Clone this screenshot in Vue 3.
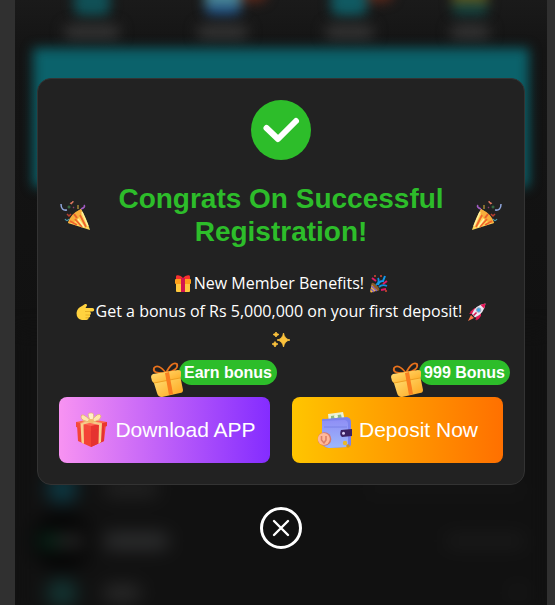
<template>
  <div class="page">
    <!-- blurred page behind the dialog -->
    <div class="backdrop" aria-hidden="true">
      <div class="nav">
        <div v-for="n in navItems" :key="n" class="nav-item" :class="n">
          <i class="nav-icon"></i>
          <i class="nav-label"></i>
        </div>
      </div>
      <div class="banner"></div>
      <div class="list">
        <div v-for="r in rows" :key="r" class="row" :class="r">
          <i class="row-icon"></i>
          <i class="row-label"></i>
          <i class="row-value"></i>
        </div>
      </div>
    </div>

    <div class="overlay">
      <section class="dialog" role="dialog" aria-labelledby="title">
        <svg class="check" viewBox="0 0 60 60">
          <circle cx="30" cy="30" r="30" fill="#2dbd2a" />
          <path d="M15.5 28 L27 39 L45 21" fill="none" stroke="#fff" stroke-width="6" stroke-linecap="round" stroke-linejoin="round" />
        </svg>

        <div class="heading">
          <svg class="popper" viewBox="0 0 32 32"><use href="#popper" /></svg>
          <h1 id="title">Congrats On Successful Registration!</h1>
          <svg class="popper flip" viewBox="0 0 32 32"><use href="#popper" /></svg>
        </div>

        <div class="message">
          <p>
            <svg class="emoji" viewBox="0 0 20 20">
              <rect x="3" y="8" width="14" height="10" rx="1" fill="#ffc83d" />
              <rect x="2" y="5" width="16" height="5" rx="1" fill="#ff9f1a" />
              <path d="M3 2.5 Q3 1 5 1.2 Q8 1.5 10 4 Q12 1.5 15 1.2 Q17 1 17 2.5 V5 H3Z" fill="#f8312f" />
              <rect x="8" y="4" width="4" height="14" fill="#d3164f" />
            </svg>New Member Benefits!
            <svg class="emoji" viewBox="0 0 20 20">
              <path d="M3 9 L10 16 L2.5 18.5 Q1 18.5 1.2 17Z" fill="#f5b83d" />
              <path d="M2.5 12 L8 17 M2 15 L5 18" stroke="#7a5cc8" stroke-width="1.4" />
              <ellipse cx="6.6" cy="12.6" rx="1.6" ry="5" transform="rotate(-45 6.6 12.6)" fill="#8b5a2b" />
              <path d="M7 11 Q11 8 9 4 M10 13 Q13 10 18 12" fill="none" stroke="#0f8fe0" stroke-width="1.8" />
              <path d="M9 11 Q10 7 14 7 L16 2" fill="none" stroke="#1399ef" stroke-width="2" />
              <path d="M3 4 L7 7 M12 16 L17 15 M14 10 L18 7" stroke="#e01b68" stroke-width="2" />
              <path d="M5 2 H7 M11 2 H13 M16 17 H18" stroke="#d94830" stroke-width="1.5" />
            </svg>
          </p>
          <p>
            <svg class="emoji" viewBox="0 0 20 20">
              <path d="M1.5 11 Q2 6 7 4 L10 2 Q12.5 1.5 12 3.5 L10.5 6 H17.5 Q19.2 6.2 19.2 7.8 Q19.2 9.4 17.5 9.5 H15 Q17 12 14.8 13 Q16 15 13.5 15.8 Q14 17.5 11.5 18 H7 Q1.5 17 1.5 11Z" fill="#ffd23f" />
              <path d="M10 9.5 H15 M10.5 13 H14.8 M10.5 15.8 H13.5" stroke="#dfa420" stroke-width="0.8" fill="none" />
            </svg>Get a bonus of Rs 5,000,000 on your first deposit!
            <svg class="emoji" viewBox="0 0 20 20">
              <path d="M6 8 L2 12 L6 12Z M11 14 L8 18 L12 17 L14 12Z" fill="#c9124f" />
              <path d="M3 10 L7.5 6 L11 8 L6 13Z M9 15 L14 11 L14 14 L9.5 18.5Z" fill="#e01b55" />
              <path d="M4 13 L7 16 L1 19Z" fill="#ff7a4d" />
              <path d="M5 12 Q8 3 18.5 1.5 Q17 12 8 15.5Z" fill="#ece8f3" />
              <path d="M13.5 3 Q16 1.5 18.5 1.5 Q18.3 4 17 6.5Z" fill="#e8185a" />
              <circle cx="11.7" cy="8" r="2.2" fill="#3aa6e8" stroke="#9aa6b8" />
              <path d="M6.5 13.5 L9.5 10.5" stroke="#d5164f" stroke-width="1.6" />
            </svg>
            <svg class="emoji" viewBox="0 0 20 20">
              <path d="M12.5 3 Q13.5 9 19 10 Q13.5 11 12.5 17 Q11.5 11 6 10 Q11.5 9 12.5 3Z M5 2 Q5.5 4 8 4.5 Q5.5 5 5 7 Q4.5 5 2 4.5 Q4.5 4 5 2Z M4 11.5 Q4.5 13.5 7 14 Q4.5 14.5 4 17 Q3.5 14.5 1 14 Q3.5 13.5 4 11.5Z" fill="#fcc33c" stroke="#fcc33c" stroke-width="0.8" />
            </svg>
          </p>
        </div>

        <div class="actions">
          <div class="action">
            <button type="button" class="cta download">
              <svg class="cta-icon" viewBox="0 0 36 36">
                <path d="M4 13 L17 16 L33 12 L31 29 L18 35 L5 29Z" fill="#f44336" />
                <path d="M18 18 L31 14 V29 L18 35Z" fill="#e53230" />
                <path d="M3 10 L18 7 L34 10 V14 L18 18 L3 14Z" fill="#ff6652" />
                <path d="M3 10 L18 14 V19 L3 15Z" fill="#f4483b" />
                <path d="M18 14 L34 10 V14 L18 19Z" fill="#e9352f" />
                <path d="M7.5 11 L10.5 12 L11 32 L8.5 30.5Z M26 12 L29 11 L28 30 L25.5 32Z" fill="#f8cf8c" />
                <path d="M7.5 11 L24 7 L27 8 L10.5 12.5Z M12 8 L29 11 L26 13 L9 9Z" fill="#f5cb88" />
                <path d="M18 9 Q8 -1 8 5 Q8 9 18 10 Q28 9 28 4 Q26 -1 18 9Z" fill="#ffe7ad" stroke="#e2b070" stroke-width="0.8" />
                <path d="M17 8 Q13 0 18 1 Q22 0 20 8Z" fill="#fff0c5" stroke="#e2b070" stroke-width="0.7" />
                <ellipse cx="18" cy="9" rx="3" ry="2" fill="#f3bc6c" />
              </svg>
              <span>Download APP</span>
            </button>
            <div class="badge"><svg class="badge-icon" viewBox="0 0 36 36"><use href="#gift" /></svg>Earn bonus</div>
          </div>
          <div class="action">
            <button type="button" class="cta deposit">
              <svg class="cta-icon" viewBox="0 0 36 36">
                <path d="M11 2 L26 0 L28 9 L12 11Z" fill="#e9f1d8" />
                <path d="M14 4 L24 2.5 L25 7 L14 8Z" fill="#8eb987" />
                <circle cx="19" cy="4.5" r="2" fill="#eef6dd" />
                <path d="M5 8 Q5 6 8 7 L30 5 Q34 6 34 10 V32 Q34 35 30 35 L12 36 Q5 35 5 30Z" fill="#7c83ed" />
                <path d="M5 9 L28 8 Q31 9 31 12 V32 L30 35 L12 36 Q5 34 5 30Z" fill="url(#wallet)" />
                <path d="M7 15 H30" stroke="#7880e4" stroke-width="0.9" />
                <path d="M24 18 L35 17 V24 L25 25 Q22 23 24 18Z" fill="#3c2263" />
                <circle cx="26.5" cy="21.3" r="1.5" fill="#d7cdf4" />
                <circle cx="7.5" cy="27" r="6.8" fill="#d8796b" />
                <circle cx="6.8" cy="27" r="6" fill="#ffb99a" />
                <path d="M4.5 24 V28 L7 31 L9 28 V24" fill="none" stroke="#dd8069" stroke-width="1.6" />
                <circle cx="28" cy="31" r="2.2" fill="#e9b829" />
                <circle cx="31" cy="34" r="1.8" fill="#d59618" />
              </svg>
              <span>Deposit Now</span>
            </button>
            <div class="badge"><svg class="badge-icon" viewBox="0 0 36 36"><use href="#gift" /></svg>999 Bonus</div>
          </div>
        </div>
      </section>

      <button type="button" class="close" aria-label="Close">
        <svg viewBox="0 0 42 42">
          <circle cx="21" cy="21" r="19.5" fill="none" stroke="#fff" stroke-width="3" />
          <path d="M14 14 L28 28 M28 14 L14 28" stroke="#fff" stroke-width="2.4" stroke-linecap="round" />
        </svg>
      </button>
    </div>

    <!-- shared symbols -->
    <svg class="defs" aria-hidden="true">
      <defs>
        <linearGradient id="gold" x1="0" y1="0" x2="1" y2="1">
          <stop offset="0" stop-color="#ffe37a" />
          <stop offset="1" stop-color="#ffa51c" />
        </linearGradient>
        <linearGradient id="wallet" x1="0" y1="0" x2="0" y2="1">
          <stop offset="0" stop-color="#8f8ff5" />
          <stop offset="1" stop-color="#9db8fb" />
        </linearGradient>
      </defs>
      <symbol id="popper" viewBox="0 0 32 32">
        <path d="M22 10 Q27 18 31 31 L9 24 Q12 16 22 10Z" fill="#ffd659" />
        <path d="M22 10 Q24 15 19 20 Q14 25 9 24 Q11 15 22 10Z" fill="#f7ad3c" />
        <path d="M11 22 L18 26 M16 20 L23 28 M21 16 L27 28" stroke="#f0642c" stroke-width="1.8" />
        <path d="M15 15 L18 19" stroke="#e8622c" stroke-width="2" />
        <path d="M23 13 L29 27 M19 20 L25 28" stroke="#fff2a8" stroke-width="1.3" />
        <path d="M2 5 Q2 12 8 11" fill="none" stroke="#8fa6dc" stroke-width="1.5" />
        <path d="M12 4 Q14 4 14 2 M13 5 L11 4" fill="none" stroke="#d9745d" stroke-width="1.3" />
        <path d="M25 6 Q27 8 22 10" fill="none" stroke="#a35cc4" stroke-width="1.6" />
        <path d="M6 20 Q8 23 10 20" fill="none" stroke="#4a9db0" stroke-width="1.3" />
        <path d="M8 15 L10 17 L12 15" fill="none" stroke="#b8402f" stroke-width="1.5" />
        <path d="M19 6 V10" stroke="#b8963a" stroke-width="1.3" />
        <circle cx="10" cy="8" r="1" fill="none" stroke="#3f8450" />
        <path d="M14 8 L15 9" stroke="#8c3f6c" stroke-width="1.3" />
      </symbol>
      <symbol id="gift" viewBox="0 0 36 36">
        <path d="M17 12 Q3 13 5 7 Q9 2 17 12 Q23 0 28 3 Q30 9 17 12" fill="none" stroke="#e8711c" stroke-width="1.8" />
        <path d="M4 19 L31 14 L34 29 Q34 32 31 32 L13 36 Q9 36 8 32Z" fill="url(#gold)" />
        <path d="M2 16 Q2 14 4 13 L29 9 Q32 9 32 11 L32 15 Q32 17 30 17 L6 22 Q4 22 3 20Z" fill="url(#gold)" />
        <path d="M5 22 L31 17" stroke="#e99516" stroke-width="0.8" />
        <path d="M16 12 L20 11 L24 33 L20 34Z" fill="#f97d1f" />
      </symbol>
    </svg>
  </div>
</template>

<script setup>
const navItems = ['one', 'two', 'three', 'four']
const rows = ['first', 'second', 'third']
</script>

<style>
body {
  margin: 0;
  background: #303030;
}
</style>

<style scoped>
* {
  box-sizing: border-box;
}

.page {
  position: relative;
  min-height: 100vh;
  margin: 0 8px 0 15px;
  background: #121212;
  overflow: hidden;
  font-family: Arial, "Liberation Sans", sans-serif;
}

.defs {
  position: absolute;
  width: 0;
  height: 0;
}

/* background page */
.backdrop {
  position: absolute;
  inset: 0;
  overflow: hidden;
  background: linear-gradient(#1a1a1a, #141414 48px, #111 330px);
}

.backdrop i {
  display: block;
}

.nav {
  display: flex;
  justify-content: space-between;
  height: 48px;
  padding: 0 55px 0 46px;
}

.nav-item {
  display: flex;
  flex-direction: column;
  align-items: center;
  gap: 9px;
  width: 62px;
}

.nav-icon {
  width: 36px;
  height: 30px;
  margin-top: -14px;
  border-radius: 8px;
  background: #105056;
  filter: blur(6px);
}

.nav-label {
  width: 90%;
  height: 14px;
  border-radius: 7px;
  background: #363636;
  filter: blur(7px);
}

.two { width: 56px; }
.three { width: 54px; }
.four { width: 44px; }

.two .nav-icon { background: linear-gradient(#4b8796 55%, #1d4a7c 75%); }
.three .nav-icon,
.two .nav-icon { box-shadow: 26px -14px 0 #5c281a; }
.three .nav-icon { background: #105a62; }
.four .nav-icon { background: linear-gradient(#5c571f 50%, #12403f 65%); }

.banner {
  height: 139px;
  margin: 0 18px;
  background: #0b626b;
  filter: blur(6px);
}

.list {
  margin-top: 143px;
  padding: 133px 22px 0;
  background: #111;
  filter: blur(9px);
}

.row {
  display: flex;
  align-items: center;
  gap: 16px;
  height: 52px;
}

.row-icon {
  flex-shrink: 0;
  width: 30px;
  height: 28px;
  margin: 0 10px;
  border-radius: 50%;
  background: #0c3a45;
}

.row-label {
  width: 56px;
  height: 16px;
  border-radius: 8px;
  background: #222;
}

.row-value {
  width: 160px;
  height: 14px;
  margin-left: auto;
  border-radius: 7px;
  background: #141414;
}

.second .row-icon {
  width: 60px;
  height: 60px;
  margin: 0 -5px;
  background: linear-gradient(90deg, #073420 30%, #2c2c2c 50%) center / 44px 12px no-repeat #050505;
}

.second .row-label {
  width: 66px;
  background: #2f3031;
}

.second .row-value {
  width: 80px;
  background: #1a1a1a;
}

.third .row-icon { background: #123533; }
.third .row-label { width: 38px; background: #2b2b2b; }
.third .row-value { width: 14px; background: #1b1b1b; }

/* dialog */
.overlay {
  position: relative;
  display: flex;
  flex-direction: column;
  align-items: center;
  gap: 22px;
  padding: 78px 22px 22px;
}

.dialog {
  display: flex;
  flex-direction: column;
  align-items: center;
  width: 100%;
  padding: 21px;
  border: 1px solid #333;
  border-radius: 14px;
  background: #222;
}

.check {
  width: 60px;
  height: 60px;
}

.heading {
  display: flex;
  align-items: center;
  justify-content: space-between;
  gap: 16px;
  width: 100%;
  margin-top: 22px;
}

.heading h1 {
  flex: 1;
  margin: 0;
  color: #2dbd2a;
  font-size: 28px;
  font-weight: 700;
  line-height: 33px;
  text-align: center;
}

.popper {
  flex-shrink: 0;
  width: 32px;
  height: 32px;
}

.flip {
  transform: scaleX(-1);
}

.message {
  margin-top: 21px;
  padding: 0 8px;
  color: #fff;
  font-family: "Segoe UI", "Open Sans", "Noto Sans", sans-serif;
  font-size: 16px;
  line-height: 28px;
  text-align: center;
}

.message p {
  margin: 0;
}

.emoji {
  width: 20px;
  height: 20px;
  margin: 0 1px;
  vertical-align: -5px;
}

.actions {
  display: grid;
  grid-template-columns: 1fr 1fr;
  gap: 22px;
  width: 100%;
  margin-top: 44px;
}

.action {
  position: relative;
}

.cta {
  display: flex;
  align-items: center;
  justify-content: center;
  gap: 6px;
  width: 100%;
  height: 66px;
  padding: 0;
  border: none;
  border-radius: 8px;
  color: #fff;
  font-family: inherit;
  font-size: 21px;
  white-space: nowrap;
  cursor: pointer;
}

.download {
  background: linear-gradient(90deg, #f893f2, #842cff);
}

.deposit {
  background: linear-gradient(90deg, #ffc500, #ff7000);
}

.cta-icon {
  width: 36px;
  height: 36px;
}

.badge {
  position: absolute;
  top: -37px;
  right: -7px;
  height: 25px;
  padding: 0 5px;
  border-radius: 13px;
  background: #2dbd2a;
  color: #fff;
  font-size: 16px;
  font-weight: 700;
  line-height: 25px;
  white-space: nowrap;
}

.badge-icon {
  position: absolute;
  top: 1px;
  right: calc(100% - 6px);
  width: 36px;
  height: 36px;
}

.close {
  width: 42px;
  height: 42px;
  padding: 0;
  border: none;
  border-radius: 50%;
  background: none;
  cursor: pointer;
}

.close svg {
  display: block;
}
</style>
